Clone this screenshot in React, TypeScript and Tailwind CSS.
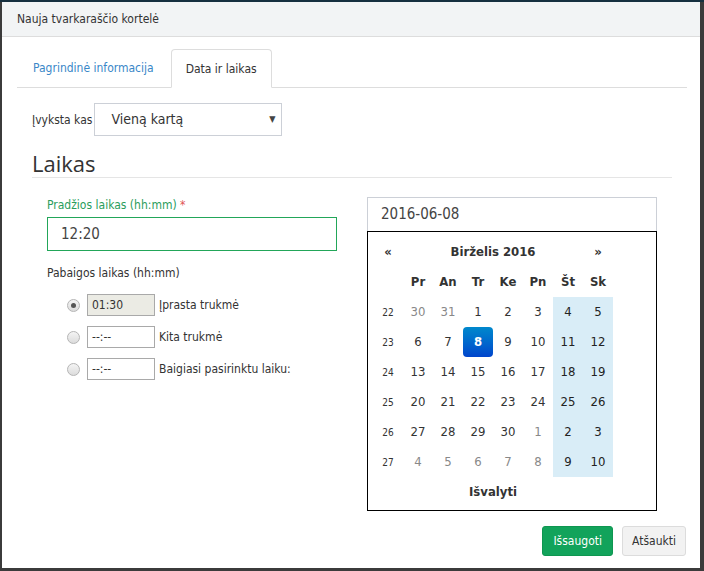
import React from "react";

const font = "font-['DejaVu_Sans_Condensed','DejaVu_Sans',sans-serif]";

type Day = { d: number; other?: boolean; sel?: boolean };

const weeks: { w: number; days: Day[] }[] = [
  { w: 22, days: [{ d: 30, other: true }, { d: 31, other: true }, { d: 1 }, { d: 2 }, { d: 3 }, { d: 4 }, { d: 5 }] },
  { w: 23, days: [{ d: 6 }, { d: 7 }, { d: 8, sel: true }, { d: 9 }, { d: 10 }, { d: 11 }, { d: 12 }] },
  { w: 24, days: [{ d: 13 }, { d: 14 }, { d: 15 }, { d: 16 }, { d: 17 }, { d: 18 }, { d: 19 }] },
  { w: 25, days: [{ d: 20 }, { d: 21 }, { d: 22 }, { d: 23 }, { d: 24 }, { d: 25 }, { d: 26 }] },
  { w: 26, days: [{ d: 27 }, { d: 28 }, { d: 29 }, { d: 30 }, { d: 1, other: true }, { d: 2, other: true }, { d: 3, other: true }] },
  { w: 27, days: [{ d: 4, other: true }, { d: 5, other: true }, { d: 6, other: true }, { d: 7, other: true }, { d: 8, other: true }, { d: 9, other: true }, { d: 10, other: true }] },
];

const dayNames = ["Pr", "An", "Tr", "Ke", "Pn", "Št", "Sk"];

function Radio({ checked }: { checked?: boolean }) {
  return (
    <span className="w-[13px] h-[13px] rounded-full border border-[#b5b5b5] bg-gradient-to-b from-[#f4f4f4] to-[#dcdcdc] flex items-center justify-center shrink-0">
      {checked && <span className="w-[5px] h-[5px] rounded-full bg-[#555]" />}
    </span>
  );
}

function DurationRow({ value, label, checked, disabled }: { value: string; label: string; checked?: boolean; disabled?: boolean }) {
  return (
    <div className="flex items-center h-[22px]">
      <Radio checked={checked} />
      <div
        className={`ml-[7px] w-[68px] h-[22px] border border-[#a9a9a9] flex items-center pl-[4px] text-[12px] text-[#333] ${disabled ? "bg-[#ebebe4]" : "bg-white"}`}
      >
        {value}
      </div>
      <span className="ml-[4px] text-[12px] text-[#333]">{label}</span>
    </div>
  );
}

function Calendar() {
  return (
    <div className="border border-black h-[280px] pt-[5px] pl-[5px]">
      <div className="grid grid-cols-[repeat(8,30px)] auto-rows-[30px] text-[13px] text-[#333]">
        <div className="flex items-center justify-center font-bold">«</div>
        <div className="col-span-6 flex items-center justify-center font-bold">Birželis 2016</div>
        <div className="flex items-center justify-center font-bold">»</div>

        <div />
        {dayNames.map((n) => (
          <div key={n} className="flex items-center justify-center font-bold">{n}</div>
        ))}

        {weeks.map((wk) => (
          <React.Fragment key={wk.w}>
            <div className="flex items-center justify-center text-[10px]">{wk.w}</div>
            {wk.days.map((day, i) => {
              const weekend = i >= 5;
              let cls = "flex items-center justify-center ";
              if (day.sel) cls += "bg-gradient-to-b from-[#0088cc] to-[#0044cc] text-white font-bold rounded-[4px]";
              else if (weekend) cls += "bg-[#d9edf7] text-[#222]";
              else if (day.other) cls += "text-[#888]";
              return (
                <div key={i} className={cls}>{day.d}</div>
              );
            })}
          </React.Fragment>
        ))}

        <div className="col-span-8 flex items-center justify-center font-bold">Išvalyti</div>
      </div>
    </div>
  );
}

export default function App() {
  return (
    <div className={`w-[704px] h-[571px] bg-[#3b3b3b] border-t-2 border-[#16303f] pl-[2px] ${font}`}>
      <div className="w-[698px] h-[566px] bg-white flex flex-col">
        <div className="h-[35px] bg-[#f2f4f5] border-b border-[#dddddd] flex items-center pl-[15px] text-[12px] text-[#333]">
          Nauja tvarkaraščio kortelė
        </div>

        <div className="pl-[15px] pr-[13px] pt-[12px]">
          <div className="flex border-b border-[#dddddd] h-[39px] text-[12px]">
            <div className="px-[16px] flex items-center text-[#3a87c8] mr-[1px]">Pagrindinė informacija</div>
            <div className="px-[14px] flex items-center text-[#333] border border-[#dddddd] border-b-white rounded-t-[4px] bg-white -mb-px">
              Data ir laikas
            </div>
          </div>

          <div className="px-[15px]">
            <div className="flex items-center mt-[15px]">
              <span className="text-[12px] text-[#333] mr-[2px]">Įvyksta kas</span>
              <div className="w-[188px] h-[33px] border border-[#ccd0d7] flex items-center justify-between pl-[16px] pr-[6px]">
                <span className="text-[14px] text-[#333]">Vieną kartą</span>
                <span className="text-[9px] text-[#444]">▼</span>
              </div>
            </div>

            <div className="mt-[14px] border-b border-[#e5e5e5] pb-[1px] font-['Open_Sans',sans-serif] text-[22px] leading-[26px] text-[#333]">
              Laikas
            </div>

            <div className="flex mt-[20px]">
              <div className="w-[320px] px-[15px]">
                <div className="text-[12px] text-[#2a9d5c] leading-[15px]">
                  Pradžios laikas (hh:mm) <span className="text-[#e05555]">*</span>
                </div>
                <div className="mt-[4px] h-[34px] border border-[#22a659] flex items-center pl-[13px] text-[15px] text-[#444]">
                  12:20
                </div>
                <div className="mt-[15px] text-[12px] text-[#333] leading-[15px]">Pabaigos laikas (hh:mm)</div>
                <div className="mt-[13px] pl-[20px] flex flex-col gap-[10px]">
                  <DurationRow value="01:30" label="Įprasta trukmė" checked disabled />
                  <DurationRow value="--:--" label="Kita trukmė" />
                  <DurationRow value="--:--" label="Baigiasi pasirinktu laiku:" />
                </div>
              </div>

              <div className="w-[320px] px-[15px] -mt-[1px]">
                <div className="h-[34px] border border-[#ccd0d7] border-b-0 flex items-center pl-[13px] text-[15px] text-[#444]">
                  2016-06-08
                </div>
                <Calendar />
              </div>
            </div>
          </div>
        </div>

        <div className="flex justify-end gap-[9px] pr-[14px] mt-[15px]">
          <button className="h-[30px] px-[10px] bg-[#12a35b] border border-[#0e9650] rounded-[3px] text-[12px] text-white">Išsaugoti</button>
          <button className="h-[30px] px-[9px] bg-[#f2f2f2] border border-[#dcdcdc] rounded-[3px] text-[12px] text-[#333]">Atšaukti</button>
        </div>
      </div>
    </div>
  );
}
